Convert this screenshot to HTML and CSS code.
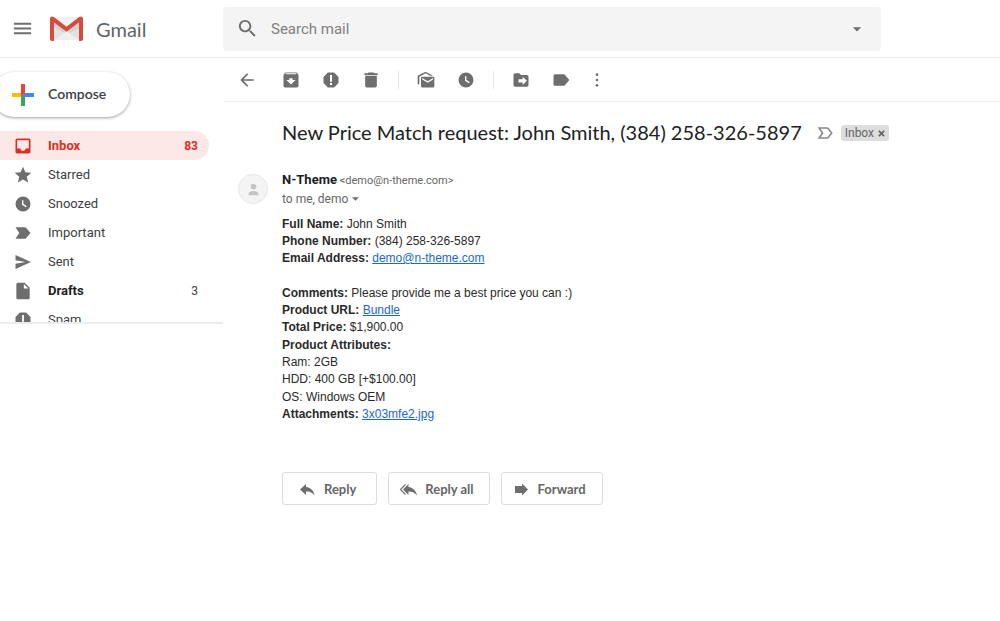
FILE: index.html
```
<!DOCTYPE html>
<html lang="en">
<head>
    <meta charset="UTF-8">
    <meta name="viewport" content="width=device-width, initial-scale=1.0">
    <title>New Price Match request - Gmail</title>
    <link rel="stylesheet" href="styles.css">
</head>
<body>
    <header class="header">
        <div class="brand">
            <button class="menu-btn" aria-label="Main menu">
                <svg class="icon-lg" viewBox="0 0 24 24"><path d="M3 18h18v-2H3v2zm0-5h18v-2H3v2zm0-7v2h18V6H3z"/></svg>
            </button>
            <a href="#" class="logo">
                <svg class="logo-mark" viewBox="0 0 33 25">
                    <path fill="#e2e2e2" d="M2 1h29v23H2z"/>
                    <path fill="#f2f2f2" d="M4 1h25L16.500 11z"/>
                    <path fill="#d2d2d2" d="M4 7l12.500 9L29 7v6L16.500 18 4 11z"/>
                    <path fill="#efefef" d="M4 24l12.500-9L29 24z"/>
                    <path fill="#d54c3f" d="M0 2.500C0 .8 2.300-.2 3.800 1L16.500 10.800 29.200 1C30.700-.2 33 .8 33 2.500V23c0 1.100-.9 2-2 2h-2V6.400L16.500 15.700 4 6.400V25H2c-1.100 0-2-.9-2-2z"/>
                </svg>
                <span>Gmail</span>
            </a>
        </div>
        <form class="search">
            <button type="button" class="search-btn" aria-label="Search">
                <svg class="icon-lg" viewBox="0 0 24 24"><path d="M15.500 14h-.79l-.28-.27C15.410 12.590 16 11.110 16 9.500 16 5.910 13.090 3 9.500 3S3 5.910 3 9.500 5.910 16 9.500 16c1.610 0 3.090-.59 4.230-1.570l.27.28v.79l5 4.990L20.490 19l-4.990-5zm-6 0C7.010 14 5 11.990 5 9.500S7.010 5 9.500 5 14 7.010 14 9.500 11.990 14 9.500 14z"/></svg>
            </button>
            <input type="text" class="search-input" placeholder="Search mail" aria-label="Search mail">
            <button type="button" class="search-btn" aria-label="Search options">
                <svg class="icon" viewBox="0 0 24 24"><path d="M7 10l5 5 5-5z"/></svg>
            </button>
        </form>
    </header>

    <div class="page">
        <aside class="sidebar">
            <button class="compose">
                <svg class="plus" viewBox="0 0 22 22">
                    <path fill="#ea4335" d="M9 0h4v9l-4 4z"/>
                    <path fill="#4285f4" d="M13 9h9v4h-9z"/>
                    <path fill="#34a853" d="M9 13h4v9H9z"/>
                    <path fill="#fbbc05" d="M0 9h9v4H0z"/>
                    <path fill="#ea4335" d="M9 9h4l-4 4z"/>
                    <path fill="#4285f4" d="M13 9v4H9z"/>
                </svg>
                <span>Compose</span>
            </button>
            <nav class="nav">
                <a href="#" class="nav-item active">
                    <svg class="icon" viewBox="0 0 24 24"><path d="M19 3H4.990C3.880 3 3 3.900 3 5v14c0 1.100.88 2 1.990 2H19c1.100 0 2-.9 2-2V5c0-1.100-.9-2-2-2zm0 12h-4c0 1.660-1.350 3-3 3s-3-1.340-3-3H4.990V5H19v10z"/></svg>
                    <span class="name">Inbox</span>
                    <span class="count">83</span>
                </a>
                <a href="#" class="nav-item">
                    <svg class="icon" viewBox="0 0 24 24"><path d="M12 17.270L18.180 21l-1.640-7.030L22 9.240l-7.190-.61L12 2 9.190 8.630 2 9.240l5.460 4.730L5.820 21z"/></svg>
                    <span class="name">Starred</span>
                </a>
                <a href="#" class="nav-item">
                    <svg class="icon" viewBox="0 0 24 24"><path fill-rule="evenodd" d="M12 3a9 9 0 1 0 0 18 9 9 0 0 0 0-18zm-1.200 4.500h1.700v4.600l3.900 2.400-.9 1.400-4.700-2.900z"/></svg>
                    <span class="name">Snoozed</span>
                </a>
                <a href="#" class="nav-item">
                    <svg class="icon" viewBox="0 0 24 24"><path d="M3 18.990l11 .01c.67 0 1.270-.33 1.630-.84L21 12l-5.370-6.160C15.270 5.330 14.670 5 14 5L3 5.010 7.550 12 3 18.990z"/></svg>
                    <span class="name">Important</span>
                </a>
                <a href="#" class="nav-item">
                    <svg class="icon" viewBox="0 0 24 24"><path d="M3 20.500L21.500 12 3 3.500V10l12 2-12 2z"/></svg>
                    <span class="name">Sent</span>
                </a>
                <a href="#" class="nav-item unread">
                    <svg class="icon" viewBox="0 0 24 24"><path d="M6 2c-1.100 0-1.990.9-1.990 2L4 20c0 1.100.89 2 1.990 2H18c1.100 0 2-.9 2-2V8l-6-6H6zm7 7V3.500L18.500 9H13z"/></svg>
                    <span class="name">Drafts</span>
                    <span class="count">3</span>
                </a>
                <a href="#" class="nav-item">
                    <svg class="icon" viewBox="0 0 24 24"><path d="M15.730 3H8.270L3 8.270v7.460L8.270 21h7.460L21 15.730V8.270L15.730 3zM13.100 18h-2.200v-2.200h2.200zm0-4h-2.200V6h2.200z"/></svg>
                    <span class="name">Spam</span>
                </a>
            </nav>
        </aside>

        <main class="main">
            <div class="toolbar">
                <button class="tool back" aria-label="Back">
                    <svg class="icon" viewBox="0 0 24 24"><path d="M20 11H7.830l5.590-5.590L12 4l-8 8 8 8 1.410-1.410L7.830 13H20v-2z"/></svg>
                </button>
                <button class="tool" aria-label="Archive">
                    <svg class="icon" viewBox="0 0 24 24"><path d="M20.540 5.230l-1.390-1.680C18.880 3.210 18.470 3 18 3H6c-.47 0-.88.21-1.160.55L3.460 5.230C3.170 5.570 3 6.020 3 6.500V19c0 1.100.9 2 2 2h14c1.100 0 2-.9 2-2V6.500c0-.48-.17-.93-.46-1.270zM12 17.500L6.500 12H10v-2h4v2h3.500L12 17.500zM5.120 5l.81-1h12l.94 1H5.120z"/></svg>
                </button>
                <button class="tool" aria-label="Report spam">
                    <svg class="icon" viewBox="0 0 24 24"><path d="M15.730 3H8.270L3 8.270v7.460L8.270 21h7.460L21 15.730V8.270L15.730 3zM13.200 18h-2.400v-2.400h2.400zm0-4h-2.400V6h2.400z"/></svg>
                </button>
                <button class="tool" aria-label="Delete">
                    <svg class="icon" viewBox="0 0 24 24"><path d="M5 19c0 1.100.9 2 2 2h10c1.100 0 2-.9 2-2V7H5v12zM20 4h-4l-1-1H9L8 4H4v2h16V4z"/></svg>
                </button>
                <span class="divider"></span>
                <button class="tool" aria-label="Mark as unread">
                    <svg class="icon" viewBox="0 0 24 24"><path d="M20.500 8H7.500C6.700 8 6 8.700 6 9.500v10c0 .8.700 1.500 1.500 1.500h13c.8 0 1.500-.7 1.500-1.500v-10c0-.8-.7-1.500-1.500-1.500zm0 3.500L14 15.300l-6.500-3.800V9.700l6.500 3.800 6.500-3.800z"/><path d="M19.800 7c-.1-.5-.4-.9-.8-1.100L11.500 2 3 6.300c-.6.3-1 .9-1 1.600V17h2V8l7.500-4L17 7z"/></svg>
                </button>
                <button class="tool" aria-label="Snooze">
                    <svg class="icon" viewBox="0 0 24 24"><path fill-rule="evenodd" d="M12 3a9 9 0 1 0 0 18 9 9 0 0 0 0-18zm-1.200 4.500h1.700v4.600l3.900 2.400-.9 1.400-4.700-2.900z"/></svg>
                </button>
                <span class="divider"></span>
                <button class="tool" aria-label="Move to">
                    <svg class="icon" viewBox="0 0 24 24"><path fill-rule="evenodd" d="M19 6h-7l-2-2H5C3.900 4 3 4.900 3 6v12c0 1.100.9 2 2 2h14c1.100 0 2-.9 2-2V8c0-1.100-.9-2-2-2zm-5 12v-3H9v-4h5V8l5 5z"/></svg>
                </button>
                <button class="tool" aria-label="Labels">
                    <svg class="icon" viewBox="0 0 24 24"><path d="M16.630 5.840C16.270 5.330 15.670 5 15 5H5c-1.100 0-2 .9-2 2v10c0 1.100.9 2 2 2h10c.67 0 1.270-.33 1.630-.84L22 12l-5.370-6.160z"/></svg>
                </button>
                <button class="tool more" aria-label="More">
                    <svg class="icon" viewBox="0 0 24 24"><circle cx="12" cy="4" r="2"/><circle cx="12" cy="12" r="2"/><circle cx="12" cy="20" r="2"/></svg>
                </button>
            </div>

            <article class="mail">
                <div class="subject">
                    <h1>New Price Match request: John Smith, (384) 258-326-5897</h1>
                    <button class="importance" aria-label="Mark as important">
                        <svg class="icon" viewBox="0 0 24 24"><path fill="none" stroke="#8a8a8a" stroke-width="2" d="M5 6h9.500c.6 0 1 .2 1.300.6L20 12l-4.200 5.400c-.3.400-.7.600-1.300.6H5l4-6z"/></svg>
                    </button>
                    <span class="tag">Inbox <button aria-label="Remove label Inbox"><svg viewBox="0 0 8 8"><path fill="none" stroke="#666" stroke-width="2" d="M1 1l6 6M7 1L1 7"/></svg></button></span>
                </div>

                <div class="sender">
                    <div class="avatar">
                        <svg class="icon" viewBox="0 0 24 24"><path d="M12 12c2.200 0 4-1.800 4-4s-1.800-4-4-4-4 1.800-4 4 1.800 4 4 4zm0 2c-3.500 0-7 1.500-7 4v2h14v-2c0-2.500-3.500-4-7-4z"/></svg>
                    </div>
                    <div class="sender-info">
                        <div class="from"><strong>N-Theme</strong> <span>&lt;demo@n-theme.com&gt;</span></div>
                        <button class="to">to me, demo <svg viewBox="0 0 8 4"><path d="M0 0h8L4 4z"/></svg></button>
                    </div>
                </div>

                <div class="body">
                    <p class="contact">
                        <strong>Full Name:</strong> John Smith<br>
                        <strong>Phone Number:</strong> (384) 258-326-5897<br>
                        <strong>Email Address:</strong> <a href="#">demo@n-theme.com</a>
                    </p>
                    <p>
                        <strong>Comments:</strong> Please provide me a best price you can :)<br>
                        <strong>Product URL:</strong> <a href="#">Bundle</a><br>
                        <strong>Total Price:</strong> $1,900.00
                    </p>
                    <p>
                        <strong>Product Attributes:</strong><br>
                        Ram: 2GB<br>
                        HDD: 400 GB [+$100.00]
                    </p>
                    <p>
                        OS: Windows OEM<br>
                        <strong>Attachments:</strong> <a href="#">3x03mfe2.jpg</a>
                    </p>
                </div>

                <div class="actions">
                    <button>
                        <svg viewBox="0 0 18 16"><path d="M8 6V3L2 8.500 8 14v-3.500c3.500 0 6 .5 8.500 4C16 10 13 6.500 8 6z"/></svg>
                        Reply
                    </button>
                    <button class="all">
                        <svg viewBox="0 0 18 16"><path d="M9.500 6V3L4 8.500 9.500 14v-3.500c3 0 6 .8 8.500 4C17.300 10 14 6.500 9.500 6z"/><path fill="none" stroke="#6e6e6e" stroke-width="1.200" d="M6.500 3.500l-5 5 5 5"/></svg>
                        Reply all
                    </button>
                    <button class="forward">
                        <svg viewBox="0 0 18 16"><path d="M3 5h7V2.500l6 6-6 6V12H3z"/></svg>
                        Forward
                    </button>
                </div>
            </article>
        </main>
    </div>
</body>
</html>
```
FILE: styles.css
```
* {
    box-sizing: border-box;
}

body {
    margin: 0;
    background-color: #fff;
    color: #2a2a2a;
    font-family: Roboto, Arial, sans-serif;
    font-size: 13px;
}

button {
    display: flex;
    align-items: center;
    justify-content: center;
    padding: 0;
    border: none;
    background: none;
    font-family: inherit;
    cursor: pointer;
}

svg {
    display: block;
    flex-shrink: 0;
    fill: #6e6e6e;
}

.icon {
    width: 20px;
    height: 20px;
}

.icon-lg {
    width: 23px;
    height: 23px;
}

/* header */
.header {
    display: flex;
    align-items: center;
    height: 58px;
    border-bottom: 1px solid #efefef;
}

.brand {
    display: flex;
    align-items: center;
    gap: 16px;
    width: 223px;
    padding-left: 11px;
}

.logo {
    display: flex;
    align-items: center;
    gap: 13px;
    color: #5f6368;
    font-family: Lato, sans-serif;
    font-size: 20px;
    text-decoration: none;
}

.logo-mark {
    width: 33px;
    height: 25px;
}

.search {
    display: flex;
    flex: 1;
    align-items: center;
    max-width: 658px;
    height: 44px;
    border-radius: 4px;
    background-color: #f4f4f4;
}

.search-btn {
    width: 48px;
    height: 44px;
}

.search-input {
    flex: 1;
    min-width: 0;
    padding: 0;
    border: none;
    background: none;
    color: #222;
    font-family: inherit;
    font-size: 15px;
    outline: none;
}

.search-input::placeholder {
    color: #808080;
}

/* sidebar */
.page {
    display: flex;
}

.sidebar {
    flex: 0 0 223px;
    padding-top: 14px;
}

.compose {
    gap: 14px;
    height: 45px;
    margin-left: -8px;
    padding: 0 24px 0 20px;
    border-radius: 23px;
    box-shadow: 0 1px 3px rgba(60, 64, 67, 0.5);
    color: #3c4043;
    font-family: Lato, sans-serif;
    font-size: 14px;
    font-weight: 600;
}

.compose span {
    padding-bottom: 2px;
}

.plus {
    width: 22px;
    height: 22px;
}

.nav {
    height: 193px;
    margin-top: 14px;
    border-bottom: 2px solid #ececec;
    overflow: hidden;
}

.nav-item {
    display: flex;
    align-items: center;
    height: 29px;
    margin-right: 14px;
    padding: 0 11px 0 13px;
    border-radius: 0 15px 15px 0;
    color: #3c4043;
    text-decoration: none;
}

.name {
    flex: 1;
    margin-left: 15px;
    padding-bottom: 1px;
}

.count {
    font-size: 12px;
}

.active {
    background-color: #fce8e6;
    color: #d93025;
    font-weight: 700;
}

.active svg {
    fill: #d93025;
}

.unread .name {
    color: #202124;
    font-weight: 700;
}

/* toolbar */
.main {
    flex: 1;
    min-width: 0;
}

.toolbar {
    display: flex;
    align-items: center;
    height: 44px;
    padding-left: 4px;
    border-bottom: 1px solid #efefef;
}

.tool {
    width: 40px;
    height: 40px;
}

.back {
    margin-right: 4px;
}

.more {
    width: 32px;
}

.more svg {
    width: 16px;
    height: 16px;
}

.divider {
    width: 1px;
    height: 18px;
    margin: 0 7px;
    background-color: #e6e6e6;
}

/* message */
.mail {
    padding: 17px 15px;
}

.subject {
    display: flex;
    align-items: center;
    padding-left: 44px;
}

h1 {
    margin: 0;
    padding-bottom: 2px;
    color: #202124;
    font-family: Lato, sans-serif;
    font-size: 20px;
    font-weight: 400;
    line-height: 26px;
}

.importance {
    margin: 0 6px 0 13px;
}

.tag {
    display: flex;
    align-items: center;
    gap: 4px;
    height: 16px;
    padding: 0 4px;
    border-radius: 3px;
    background-color: #ddd;
    color: #666;
    font-size: 12px;
}

.tag svg {
    width: 7px;
    height: 7px;
}

.sender {
    display: flex;
    align-items: center;
    gap: 14px;
    margin-top: 23px;
}

.avatar {
    display: flex;
    align-items: center;
    justify-content: center;
    width: 30px;
    height: 30px;
    border: 1px solid #e6e6e6;
    border-radius: 50%;
    background-color: #f4f4f4;
}

.avatar svg {
    width: 17px;
    height: 17px;
    fill: #c4c4c4;
}

.from {
    color: #666;
    font-size: 11px;
    line-height: 19px;
}

.from strong {
    color: #202124;
    font-size: 13px;
}

.to {
    gap: 4px;
    color: #666;
    font-size: 12px;
    line-height: 18px;
}

.to svg {
    width: 7px;
    height: 4px;
}

.body {
    margin-top: 8px;
    padding-left: 44px;
    font-family: "Liberation Sans", Arial, sans-serif;
    font-size: 12px;
    line-height: 17px;
}

.body p {
    margin: 0 0 1px;
}

.body .contact {
    margin-bottom: 18px;
}

.body a {
    color: #1a66d6;
}

.actions {
    display: flex;
    gap: 11px;
    margin-top: 49px;
    padding-left: 44px;
}

.actions button {
    gap: 8px;
    height: 33px;
    padding: 0 20px 0 15px;
    border: 1px solid #dadce0;
    border-radius: 3px;
    color: #666;
    font-family: Lato, sans-serif;
    font-size: 13px;
    font-weight: 700;
}

.actions .all {
    padding: 0 15px 0 10px;
}

.actions .forward {
    padding: 0 16px 0 10px;
}

.actions svg {
    width: 18px;
    height: 16px;
}
```
